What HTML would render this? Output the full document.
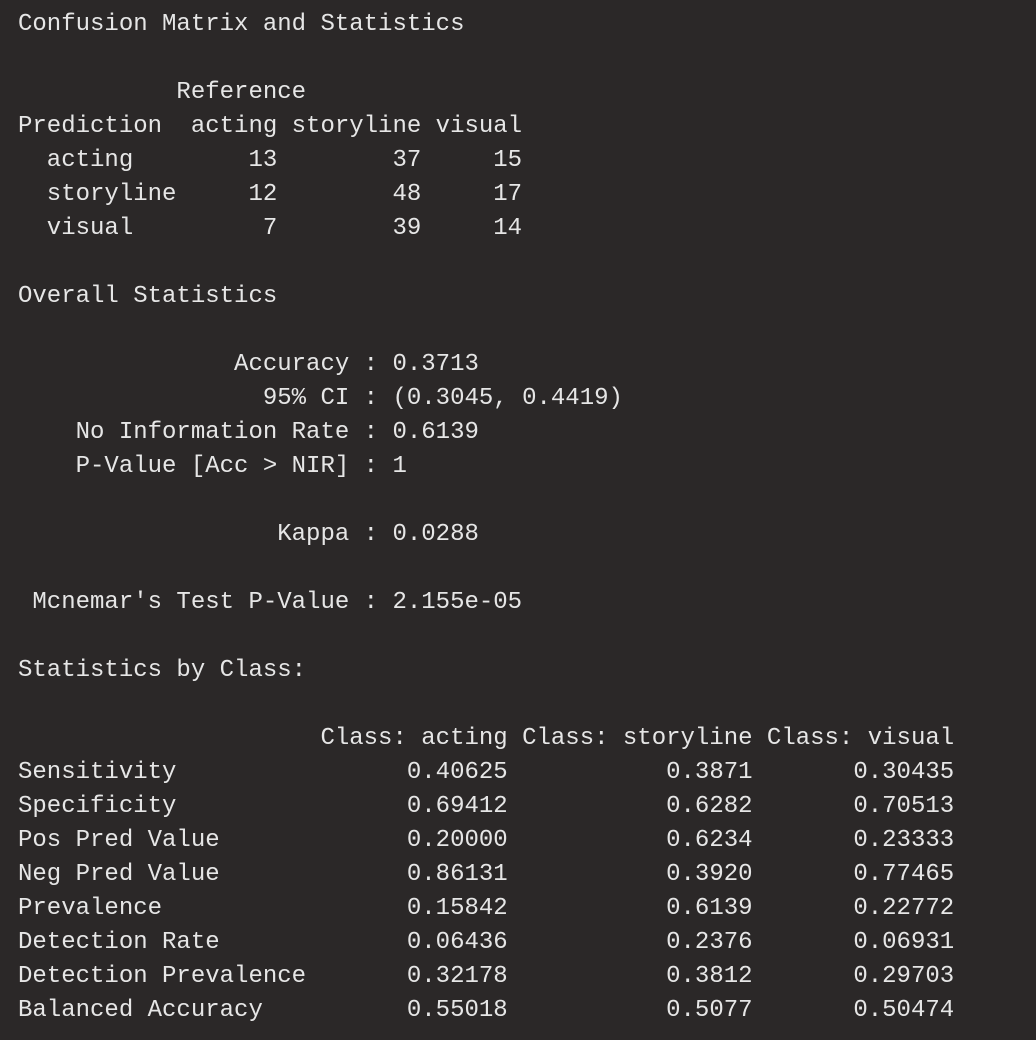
<!DOCTYPE html>
<html><head><meta charset="utf-8"><style>
html,body{margin:0;padding:0;background:#2b2828;width:1036px;height:1040px;overflow:hidden}
pre{margin:0;padding:8px 0 0 18px;font-family:"Liberation Mono",monospace;font-size:24px;line-height:34px;color:#e6e6e6;white-space:pre}
</style></head><body><pre>Confusion Matrix and Statistics

           Reference
Prediction  acting storyline visual
  acting        13        37     15
  storyline     12        48     17
  visual         7        39     14

Overall Statistics

               Accuracy : 0.3713
                 95% CI : (0.3045, 0.4419)
    No Information Rate : 0.6139
    P-Value [Acc &gt; NIR] : 1

                  Kappa : 0.0288

 Mcnemar's Test P-Value : 2.155e-05

Statistics by Class:

                     Class: acting Class: storyline Class: visual
Sensitivity                0.40625           0.3871       0.30435
Specificity                0.69412           0.6282       0.70513
Pos Pred Value             0.20000           0.6234       0.23333
Neg Pred Value             0.86131           0.3920       0.77465
Prevalence                 0.15842           0.6139       0.22772
Detection Rate             0.06436           0.2376       0.06931
Detection Prevalence       0.32178           0.3812       0.29703
Balanced Accuracy          0.55018           0.5077       0.50474</pre></body></html>
